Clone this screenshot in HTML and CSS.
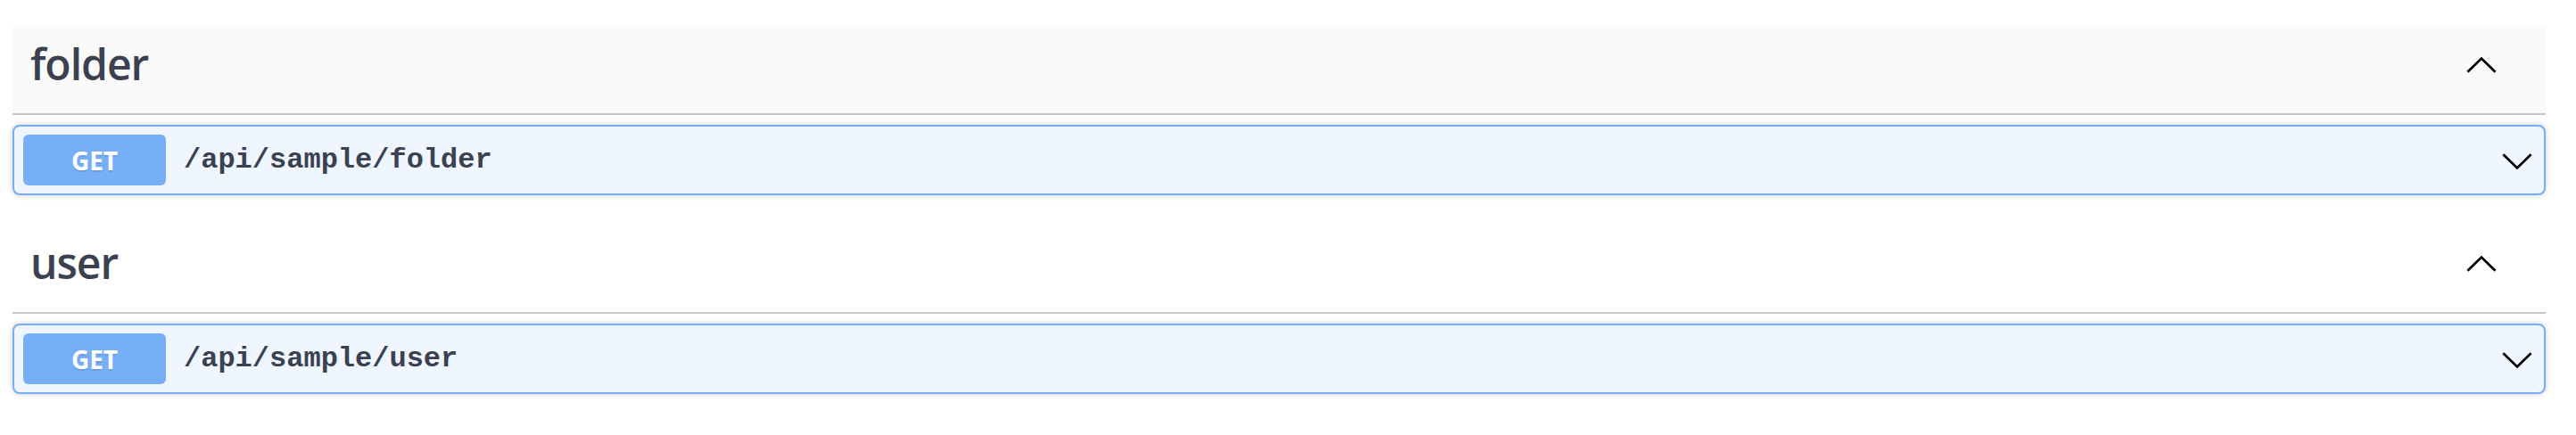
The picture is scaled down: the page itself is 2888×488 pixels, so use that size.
FILE: index.html
```html
<!DOCTYPE html>
<html lang="en">
<head>
<meta charset="utf-8">
<title>Swagger</title>
<link rel="stylesheet" href="styles.css">
</head>
<body>
<div class="wrapper">
  <section class="tag-section">
    <div class="tag tag-hover">
      <h3 class="tag-name">folder</h3>
      <button class="expand" aria-label="collapse">
        <svg class="arrow" width="40" height="40" viewBox="0 0 20 20"><polyline points="2.2,13.4 10,5.8 17.8,13.4"/></svg>
      </button>
    </div>
    <div class="opblock">
      <span class="method">GET</span>
      <span class="path">/api/sample/folder</span>
      <svg class="arrow" width="40" height="40" viewBox="0 0 20 20"><polyline points="2.2,6.6 10,14.2 17.8,6.6"/></svg>
    </div>
  </section>
  <section class="tag-section">
    <div class="tag">
      <h3 class="tag-name">user</h3>
      <button class="expand" aria-label="collapse">
        <svg class="arrow" width="40" height="40" viewBox="0 0 20 20"><polyline points="2.2,13.4 10,5.8 17.8,13.4"/></svg>
      </button>
    </div>
    <div class="opblock">
      <span class="method">GET</span>
      <span class="path">/api/sample/user</span>
      <svg class="arrow" width="40" height="40" viewBox="0 0 20 20"><polyline points="2.2,6.6 10,14.2 17.8,6.6"/></svg>
    </div>
  </section>
</div>
</body>
</html>
```
FILE: styles.css
```css
html, body {
  margin: 0;
  padding: 0;
  background: #ffffff;
}

.wrapper {
  padding: 28px 0 0 14px;
  width: 2840px;
}

.tag {
  display: flex;
  align-items: center;
  box-sizing: border-box;
  height: 101px;
  padding: 0 52px 7px 20px;
  border-bottom: 2px solid #c4c6cb;
}

.tag-hover {
  background: #fafafa;
}

.tag-name {
  flex: 1;
  margin: 0;
  font-family: "Open Sans", "Noto Sans", sans-serif;
  font-size: 48px;
  font-weight: 600;
  line-height: 48px;
  color: #3b4151;
  letter-spacing: -1px;
  position: relative;
  top: -2px;
}

.expand {
  display: flex;
  padding: 0;
  margin: 0;
  border: none;
  background: none;
}

.arrow {
  display: block;
  fill: none;
  stroke: #000000;
  stroke-width: 1.35;
  stroke-linecap: butt;
  stroke-linejoin: miter;
}

.opblock {
  display: flex;
  align-items: center;
  box-sizing: border-box;
  height: 79px;
  margin: 11px 0 32px;
  padding: 0 10px;
  border: 2px solid #77aef8;
  border-radius: 8px;
  background: #eff6ff;
  box-shadow: 0 0 6px rgba(0, 0, 0, 0.19);
}

.method {
  box-sizing: border-box;
  width: 160px;
  height: 57px;
  display: flex;
  align-items: center;
  justify-content: center;
  border-radius: 6px;
  background: #77aef8;
  color: #ffffff;
  font-family: "Open Sans", "Noto Sans", sans-serif;
  font-size: 28px;
  font-weight: 700;
  text-shadow: 0 2px 0 rgba(0, 0, 0, 0.1);
}

.path {
  flex: 1;
  padding: 0 20px;
  font-family: "Liberation Mono", "Courier New", monospace;
  font-size: 32px;
  font-weight: 700;
  color: #3b4151;
}
```
